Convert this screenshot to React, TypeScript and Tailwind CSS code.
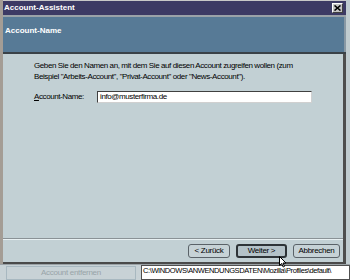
import React from "react";

export default function App() {
  return (
    <div
      className="w-[350px] h-[280px] overflow-hidden bg-[#c4ced2] flex flex-col relative"
      style={{ fontFamily: '"Liberation Sans", Arial, sans-serif' }}
    >
      <div className="flex h-[268px]">
        {/* window */}
        <div className="w-[346px] flex flex-col border-l-[3px] border-[#a49d95] bg-[#c2d0d4]">
          <div className="h-[1px] bg-[#c8c8c8]" />
          {/* title bar */}
          <div className="h-[14px] bg-[#3c3a64] flex items-center justify-between pl-[1px] pr-[3px]">
            <span className="text-white font-bold text-[8px] leading-none">Account-Assistent</span>
            <div className="w-[11px] h-[10px] bg-[#c4c4c4] border border-t-white border-l-white border-b-[#404040] border-r-[#404040] flex items-center justify-center">
              <svg width="7" height="6" viewBox="0 0 7 6">
                <path d="M0.5 0.5 L6.5 5.5 M6.5 0.5 L0.5 5.5" stroke="#000" strokeWidth="1.6" />
              </svg>
            </div>
          </div>
          <div className="h-[2px] bg-[#9aa2a8]" />
          {/* header */}
          <div className="h-[35px] bg-[#577a96] flex items-center pl-[2px] pb-[7px] border-r-[2px] border-[#8898a4]">
            <span className="text-white font-bold text-[8px]">Account-Name</span>
          </div>
          <div className="h-[2px] bg-[#3a4248]" />
          {/* content */}
          <div className="flex-1 flex flex-col border-r-[3px] border-[#4e4e4e]">
            <div className="flex-1 pl-[31px] pt-[6px] tracking-[-0.4px]">
              <p className="text-[8px] leading-[11px] text-black whitespace-nowrap">
                Geben Sie den Namen an, mit dem Sie auf diesen Account zugreifen wollen (zum
                <br />
                Beispiel "Arbeits-Account", "Privat-Account" oder "News-Account").
              </p>
              <div className="flex items-center mt-[9px]">
                <span className="text-[8px] w-[63px] text-black">
                  <span className="underline">A</span>ccount-Name:
                </span>
                <div className="w-[215px] h-[12px] bg-white border border-t-[#404040] border-l-[#404040] border-b-[#d0d0d0] border-r-[#d0d0d0] flex items-center pl-[2px]">
                  <span className="text-[8px] leading-none text-black">info@musterfirma.de</span>
                </div>
              </div>
            </div>
            <div className="h-[1px] bg-[#8a9296]" />
            <div className="h-[1px] bg-[#e8f0f2]" />
            <div className="h-[22px] flex items-center justify-end gap-[6px] pr-[3px] tracking-[-0.3px]">
              <div className="w-[42px] h-[14px] rounded-[3px] border border-[#5a6268] bg-[#c6d2d6] flex items-center justify-center text-[8px] text-black">
                &lt; Zurück
              </div>
              <div className="w-[51px] h-[14px] rounded-[3px] border-[2px] border-[#2e3438] bg-[#b4c2c8] flex items-center justify-center text-[8px] text-black">
                Weiter &gt;
              </div>
              <div className="w-[47px] h-[14px] rounded-[3px] border border-[#5a6268] bg-[#c6d2d6] flex items-center justify-center text-[8px] text-black">
                Abbrechen
              </div>
            </div>
          </div>
          <div className="h-[2px] bg-[#4a4a4a]" />
        </div>
        <div className="flex-1 bg-[#c0ccd0]" />
      </div>
      {/* bottom strip */}
      <div className="flex-1 flex bg-[#c8d2d6] border-t border-[#9aa2a6]">
        <div className="w-[130px] ml-[6px] mt-[1px] border border-[#a8b8c0] flex items-center justify-center text-[8px] tracking-[-0.3px] text-[#98a4a8]">
          Account entfernen
        </div>
        <div className="flex-1 ml-[5px] bg-white border border-[#505050] pl-[1px] text-[7.5px] tracking-[-0.4px] leading-[10px] text-black whitespace-nowrap overflow-hidden">
          C:\WINDOWS\ANWENDUNGSDATEN\Mozilla\Profiles\default\
        </div>
      </div>
      {/* mouse cursor */}
      <svg className="absolute left-[279px] top-[256px]" width="9" height="12" viewBox="0 0 9 12">
        <path d="M0.5 0.5 L0.5 9.5 L2.6 7.5 L4.2 11 L5.5 10.4 L4 7 L7 7 Z" fill="white" stroke="black" strokeWidth="1" />
      </svg>
    </div>
  );
}
